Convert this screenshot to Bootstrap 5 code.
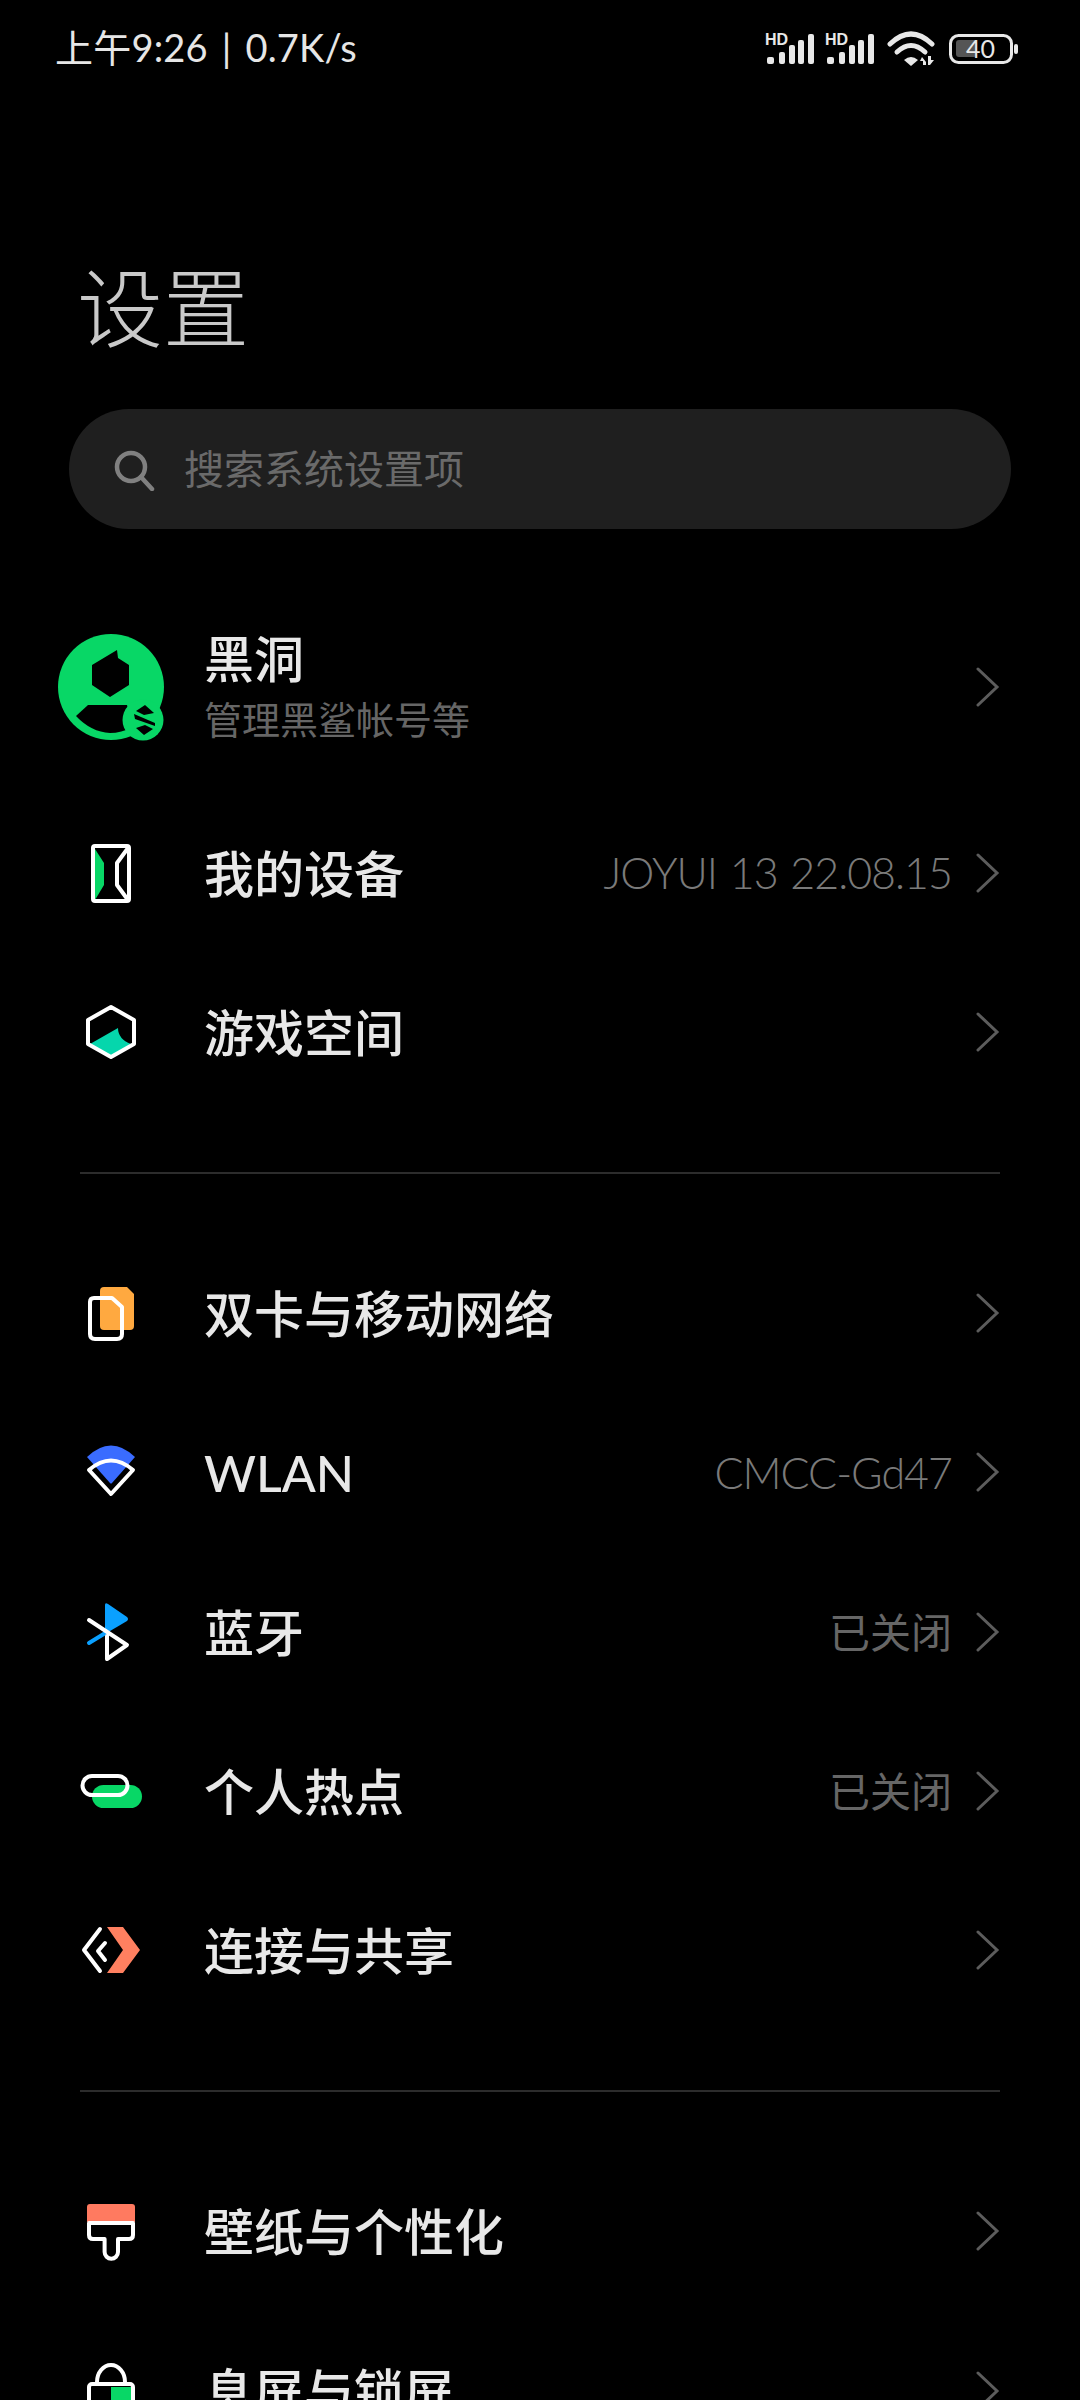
<!DOCTYPE html>
<html lang="zh-CN">
<head>
    <meta charset="UTF-8" />
    <meta name="viewport" content="width=device-width, initial-scale=1" />
    <title>设置</title>
    <link href="https://cdn.jsdelivr.net/npm/bootstrap@5.3.0/dist/css/bootstrap.min.css" rel="stylesheet" />
    <style>
        html, body { height: 2400px; overflow: hidden; }
        body {
            background: #000;
            font-family: Lato, "Noto Sans CJK SC", sans-serif;
            color: #eee;
        }
        .status-strip { height: 90px; padding: 0 60px 0 55px; }
        .status-text { font-size: 38px; line-height: 1; color: #e6e6e6; margin-top: 4px; word-spacing: 4px; letter-spacing: .2px; }
        .status-icons svg { display: block; margin-top: 10px; }
        .page-title {
            margin: 0;
            padding: 168px 0 0 77px;
            height: 319px;
            font-size: 86px;
            line-height: 100px;
            font-weight: 300;
            color: #c9c9c9;
        }
        .search-pill {
            margin-left: 69px;
            width: 942px;
            height: 120px;
            border-radius: 60px;
            background: #1f1f1f;
            padding-left: 43px;
            color: #6a6a6a;
            font-size: 40px;
        }
        .search-pill span { margin-left: 28px; }
        .setting-row { height: 159.25px; padding: 0 80px 0 71px; }
        .account-row { height: 160px; margin-top: 78px; margin-bottom: 26px; }
        .icon-box { width: 80px; height: 80px; flex: none; margin-right: 53px; }
        .avatar-box { width: 120px; height: 120px; flex: none; margin: 0 33px 0 -20px; }
        .row-label { font-size: 50px; line-height: 1.2; color: #e8e8e8; font-weight: 500; margin-top: 2px; }
        .row-sub { font-size: 38px; line-height: 1.2; color: #666; margin-top: 8px; }
        .account-name { margin-top: -2px; }
        .row-value { font-size: 43px; font-weight: 300; letter-spacing: -1px; word-spacing: 2px; color: #7a7a7a; margin-right: 24px; margin-top: 2px; }
        .value-cjk { font-size: 41px; font-weight: 400; letter-spacing: 0; color: #666; }
        .rule-line { height: 2px; background: #2c2c2c; margin: 60px 80px; }
    </style>
</head>
<body>
    <div class="status-strip d-flex align-items-center justify-content-between">
        <div class="status-text">上午9:26 | 0.7K/s</div>
        <div class="status-icons">
            <svg width="255" height="40" viewBox="765 30 255 40" fill="#e8e8e8">
                <text x="765" y="45" font-family="Liberation Sans, sans-serif" font-weight="700" font-size="16">HD</text>
                <rect x="767" y="57" width="7" height="7" rx="2"/><rect x="779" y="52" width="6" height="12" rx="2"/><rect x="789" y="45" width="6" height="19" rx="2"/><rect x="798" y="40" width="6" height="24" rx="2"/><rect x="808" y="34" width="6" height="30" rx="2"/>
                <text x="825" y="45" font-family="Liberation Sans, sans-serif" font-weight="700" font-size="16">HD</text>
                <rect x="827" y="57" width="7" height="7" rx="2"/><rect x="839" y="52" width="6" height="12" rx="2"/><rect x="849" y="45" width="6" height="19" rx="2"/><rect x="858" y="40" width="6" height="24" rx="2"/><rect x="868" y="34" width="6" height="30" rx="2"/>
                <g fill="none" stroke="#e8e8e8" stroke-width="5" stroke-linecap="round">
                    <path d="M890 44 Q911 24 932 44"/>
                    <path d="M897 52 Q911 39 925 52"/>
                </g>
                <path d="M904 60 Q911 54 918 60 L911 66 Z"/>
                <path d="M922 57 L926 62 V65 H923 V61 H920 Z M928 56 H931 V60 L934 60 L930 65 H928 Z"/>
                <rect x="950.5" y="35.5" width="61" height="27" rx="8" fill="none" stroke="#e8e8e8" stroke-width="3"/>
                <rect x="956" y="40" width="21" height="17" rx="3" fill="#555"/>
                <text x="966" y="58" font-family="Lato, sans-serif" font-size="25">40</text>
                <rect x="1014" y="44" width="4" height="10" rx="2"/>
            </svg>
        </div>
    </div>

    <h1 class="page-title">设置</h1>

    <div class="search-pill d-flex align-items-center">
        <svg width="44" height="44" viewBox="0 0 44 44" fill="none" stroke="#808080" stroke-width="4.500" stroke-linecap="round">
            <circle cx="19" cy="20" r="14"/><path d="M29 30 L40 42"/>
        </svg>
        <span>搜索系统设置项</span>
    </div>

    <div class="setting-row account-row d-flex align-items-center">
        <svg class="avatar-box" viewBox="-60 -60 120 120">
            <circle r="53" fill="#08d766"/>
            <path d="M6 -37 L7 -29 L18 -22 V-2 L-1 10 L-19 -2 V-22 Z" fill="#000"/>
            <path d="M-23 18 L-35 29 Q-20 45 -1 46 Q10 46 22 40 L16 18 Z" fill="#000"/>
            <circle cx="32" cy="33" r="20.5" fill="#08d766"/>
            <path d="M34 18 L43 26 L33 28 L25 24 Z M23 27 L44 36 V39 L24 32 Z M25 41 L34 38 L42 42 L33 48 Z" fill="#000"/>
        </svg>
        <div class="flex-grow-1">
            <div class="row-label account-name">黑洞</div>
            <div class="row-sub">管理黑鲨帐号等</div>
        </div>
        <svg width="24" height="40" viewBox="0 0 24 40" fill="none" stroke="#5c5c5c" stroke-width="3" stroke-linecap="round"><path d="M2 2 L21 20 L2 38"/></svg>
    </div>

    <div class="setting-row d-flex align-items-center">
        <svg class="icon-box" viewBox="0 0 80 80" fill="none" stroke="#fff" stroke-width="4" stroke-linejoin="round">
            <path d="M24 16 L33 30 V52 L24 67 Z" fill="#08d766" stroke="none"/>
            <rect x="22" y="13" width="36" height="55" rx="2"/>
            <path d="M57 15 L46 30 V52 L57 67"/>
        </svg>
        <div class="row-label flex-grow-1">我的设备</div>
        <div class="row-value">JOYUI 13 22.08.15</div>
        <svg width="24" height="40" viewBox="0 0 24 40" fill="none" stroke="#5c5c5c" stroke-width="3" stroke-linecap="round"><path d="M2 2 L21 20 L2 38"/></svg>
    </div>

    <div class="setting-row d-flex align-items-center">
        <svg class="icon-box" viewBox="0 0 80 80" fill="none" stroke="#fff" stroke-width="4" stroke-linejoin="round">
            <path d="M19 52 L47 36 Q47 47 60 52 L40 64 Z" fill="#05d6ac" stroke="none"/>
            <path d="M40 15 L63 28 V52 L40 65 L17 52 V28 Z"/>
        </svg>
        <div class="row-label flex-grow-1">游戏空间</div>
        <svg width="24" height="40" viewBox="0 0 24 40" fill="none" stroke="#5c5c5c" stroke-width="3" stroke-linecap="round"><path d="M2 2 L21 20 L2 38"/></svg>
    </div>

    <div class="rule-line"></div>

    <div class="setting-row d-flex align-items-center">
        <svg class="icon-box" viewBox="0 0 80 80" fill="none" stroke="#fff" stroke-width="4" stroke-linejoin="round">
            <path d="M33 14 H56 L63 21 V53 Q63 57 59 57 H33 Q29 57 29 53 V18 Q29 14 33 14 Z" fill="#ffa940" stroke="none"/>
            <path d="M23 25 H41 L51 34 V61 Q51 66 46 66 H24 Q19 66 19 61 V29 Q19 25 23 25 Z"/>
        </svg>
        <div class="row-label flex-grow-1">双卡与移动网络</div>
        <svg width="24" height="40" viewBox="0 0 24 40" fill="none" stroke="#5c5c5c" stroke-width="3" stroke-linecap="round"><path d="M2 2 L21 20 L2 38"/></svg>
    </div>

    <div class="setting-row d-flex align-items-center">
        <svg class="icon-box" viewBox="0 0 80 80" fill="none" stroke="#fff" stroke-width="4" stroke-linejoin="round">
            <path d="M16 25 Q40 2 64 25 L41 51 Q40 52 39 51 Z" fill="#3a6cff" stroke="none"/>
            <path d="M18 38 Q40 19 62 38 L40 62 Z"/>
        </svg>
        <div class="row-label flex-grow-1">WLAN</div>
        <div class="row-value">CMCC-Gd47</div>
        <svg width="24" height="40" viewBox="0 0 24 40" fill="none" stroke="#5c5c5c" stroke-width="3" stroke-linecap="round"><path d="M2 2 L21 20 L2 38"/></svg>
    </div>

    <div class="setting-row d-flex align-items-center">
        <svg class="icon-box" viewBox="0 0 80 80" fill="none" stroke="#fff" stroke-width="4" stroke-linejoin="round">
            <path d="M34 13 Q34 10 37 12 L56 25 Q58 27 56 29 L34 42 Z" fill="#0aa0ff" stroke="none"/>
            <path d="M18 51 L36 40" stroke="#0aa0ff" stroke-linecap="round"/>
            <path d="M18 28 L56 53 L36 67 V44" stroke-linecap="round"/>
        </svg>
        <div class="row-label flex-grow-1">蓝牙</div>
        <div class="row-value value-cjk">已关闭</div>
        <svg width="24" height="40" viewBox="0 0 24 40" fill="none" stroke="#5c5c5c" stroke-width="3" stroke-linecap="round"><path d="M2 2 L21 20 L2 38"/></svg>
    </div>

    <div class="setting-row d-flex align-items-center">
        <svg class="icon-box" viewBox="0 0 80 80" fill="none" stroke="#fff" stroke-width="4">
            <rect x="21" y="34" width="50" height="23" rx="11.5" fill="#08d766" stroke="none"/>
            <rect x="11.500" y="25" width="45" height="19" rx="9.5"/>
        </svg>
        <div class="row-label flex-grow-1">个人热点</div>
        <div class="row-value value-cjk">已关闭</div>
        <svg width="24" height="40" viewBox="0 0 24 40" fill="none" stroke="#5c5c5c" stroke-width="3" stroke-linecap="round"><path d="M2 2 L21 20 L2 38"/></svg>
    </div>

    <div class="setting-row d-flex align-items-center">
        <svg class="icon-box" viewBox="0 0 80 80" fill="none" stroke="#fff" stroke-width="4" stroke-linecap="round" stroke-linejoin="round">
            <path d="M36 17 H52 L69 40 L52 63 H36 L52 40 Z" fill="#ff8060" stroke="none"/>
            <path d="M29 19 L13 40 L29 61"/>
            <path d="M34 33 L27 41 L34 50"/>
        </svg>
        <div class="row-label flex-grow-1">连接与共享</div>
        <svg width="24" height="40" viewBox="0 0 24 40" fill="none" stroke="#5c5c5c" stroke-width="3" stroke-linecap="round"><path d="M2 2 L21 20 L2 38"/></svg>
    </div>

    <div class="rule-line"></div>

    <div class="setting-row d-flex align-items-center">
        <svg class="icon-box" viewBox="0 0 80 80" fill="none" stroke="#fff" stroke-width="4" stroke-linejoin="round">
            <path d="M16 16 Q16 13 19 13 H61 Q64 13 64 16 V31 H16 Z" fill="#ff7a60" stroke="none"/>
            <path d="M18 32 H62 V44 Q62 48 58 48 H47 V61 A6.7 6.7 0 0 1 33.600 61 V48 H22 Q18 48 18 44 Z"/>
        </svg>
        <div class="row-label flex-grow-1">壁纸与个性化</div>
        <svg width="24" height="40" viewBox="0 0 24 40" fill="none" stroke="#5c5c5c" stroke-width="3" stroke-linecap="round"><path d="M2 2 L21 20 L2 38"/></svg>
    </div>

    <div class="setting-row d-flex align-items-center">
        <svg class="icon-box" viewBox="0 0 80 80" fill="none" stroke="#fff" stroke-width="4" stroke-linejoin="round">
            <path d="M40 36 H61 V66 H40 Z" fill="#08d766" stroke="none"/>
            <path d="M26 31 A14 17 0 0 1 54 31"/>
            <rect x="18" y="33" width="44" height="35" rx="3"/>
        </svg>
        <div class="row-label flex-grow-1">息屏与锁屏</div>
        <svg width="24" height="40" viewBox="0 0 24 40" fill="none" stroke="#5c5c5c" stroke-width="3" stroke-linecap="round"><path d="M2 2 L21 20 L2 38"/></svg>
    </div>

    <script src="https://cdn.jsdelivr.net/npm/bootstrap@5.3.0/dist/js/bootstrap.bundle.min.js"></script>
</body>
</html>
